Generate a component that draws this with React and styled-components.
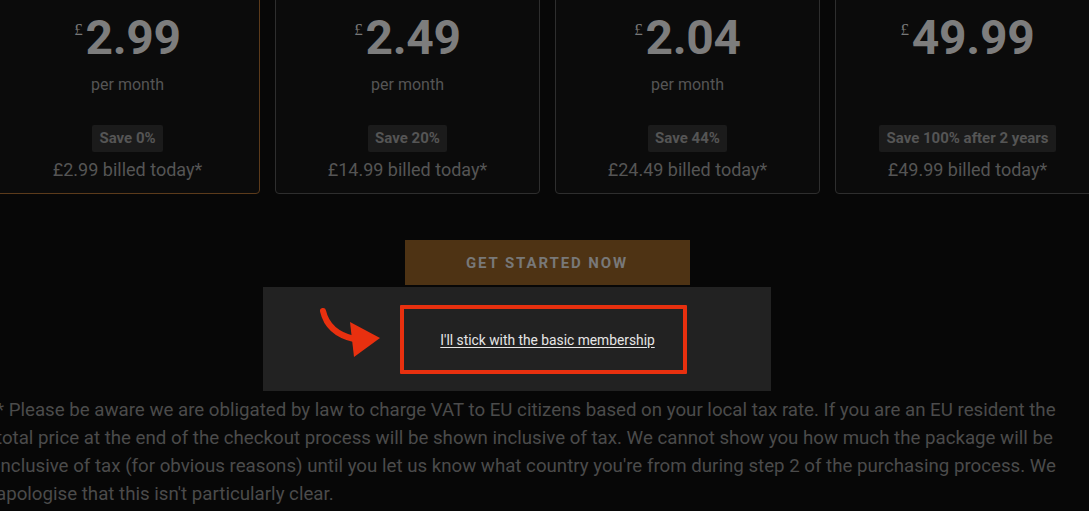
import React from 'react'
import styled, { createGlobalStyle } from 'styled-components'

const GlobalStyle = createGlobalStyle`
  html, body {
    margin: 0;
    padding: 0;
    background: #070707;
    overflow: hidden;
  }
  body {
    font-family: Roboto, "Liberation Sans", Arial, sans-serif;
  }
`

const Page = styled.div`
  width: 1104px;
  margin: -20px 0 0 -5px;
`

const CardRow = styled.div`
  display: grid;
  grid-template-columns: repeat(4, 265px);
  column-gap: 15px;
`

const Card = styled.div`
  display: flex;
  flex-direction: column;
  align-items: center;
  padding: 33px 0 11px;
  background: #0b0b0b;
  border: 1px solid ${(p) => (p.active ? '#5c3b1b' : '#2e2e2e')};
  border-radius: 4px;
`

const Price = styled.div`
  display: flex;
  align-items: flex-start;
  color: #7d7d7d;
  font-size: 48px;
  font-weight: 700;
  line-height: 48px;
  letter-spacing: -0.3px;
`

const Currency = styled.span`
  font-family: "Liberation Serif", "Times New Roman", serif;
  font-size: 17px;
  font-weight: 400;
  line-height: 17px;
  margin: 7px 3px 0 0;
  color: #777;
`

const Period = styled.div`
  margin-top: 13px;
  height: 20px;
  color: #555;
  font-size: 16px;
  line-height: 20px;
`

const Badge = styled.div`
  margin-top: 30px;
  padding: 4px 7px;
  background: #1b1b1b;
  border-radius: 2px;
  color: #555;
  font-size: 15px;
  font-weight: 700;
  line-height: 19px;
`

const Billed = styled.div`
  margin-top: 6px;
  color: #555;
  font-size: 18px;
  line-height: 24px;
`

const CtaWrap = styled.div`
  display: flex;
  justify-content: center;
  margin-top: 46px;
`

const CtaButton = styled.button`
  width: 285px;
  height: 45px;
  border: none;
  background: #4e3314;
  color: #787878;
  font-family: Roboto, "Liberation Sans", Arial, sans-serif;
  font-size: 15px;
  font-weight: 700;
  letter-spacing: 1.9px;
  text-transform: uppercase;
  cursor: pointer;
`

const DeclinePanel = styled.div`
  position: relative;
  width: 508px;
  height: 104px;
  margin: 2px 0 0 268px;
  padding: 18px 0 0 137px;
  box-sizing: border-box;
  background: #222;
`

const Arrow = styled.svg`
  position: absolute;
  left: 55px;
  top: 18px;
`

const Highlight = styled.div`
  display: flex;
  align-items: center;
  justify-content: center;
  width: 287px;
  height: 69px;
  box-sizing: border-box;
  border: 4px solid #e8300f;
  border-radius: 1px;
`

const DeclineLink = styled.a`
  margin-left: 8px;
  color: #e6e6e6;
  font-size: 13.8px;
  text-decoration: underline;
  text-underline-offset: 2px;
  cursor: pointer;
`

const Footnote = styled.p`
  width: 1068px;
  margin: 5px 0 0 1px;
  color: #4b4b4b;
  font-size: 18.7px;
  line-height: 28px;
`

const plans = [
  { price: '2.99', period: 'per month', save: 'Save 0%', billed: '£2.99 billed today*', active: true },
  { price: '2.49', period: 'per month', save: 'Save 20%', billed: '£14.99 billed today*' },
  { price: '2.04', period: 'per month', save: 'Save 44%', billed: '£24.49 billed today*' },
  { price: '49.99', period: '', save: 'Save 100% after 2 years', billed: '£49.99 billed today*' },
]

const App = () => (
  <>
    <GlobalStyle />
    <Page>
      <CardRow>
        {plans.map((plan) => (
          <Card key={plan.price} active={plan.active}>
            <Price>
              <Currency>£</Currency>
              {plan.price}
            </Price>
            <Period>{plan.period}</Period>
            <Badge>{plan.save}</Badge>
            <Billed>{plan.billed}</Billed>
          </Card>
        ))}
      </CardRow>

      <CtaWrap>
        <CtaButton>Get started now</CtaButton>
      </CtaWrap>

      <DeclinePanel>
        <Arrow width="66" height="56" viewBox="0 0 66 56">
          <path d="M5 6 Q 10 28 36 34" fill="none" stroke="#e8300f" strokeWidth="6" strokeLinecap="round" />
          <polygon points="32,17 62,33 36,52" fill="#e8300f" />
        </Arrow>
        <Highlight>
          <DeclineLink>I'll stick with the basic membership</DeclineLink>
        </Highlight>
      </DeclinePanel>

      <Footnote>
        * Please be aware we are obligated by law to charge VAT to EU citizens based on your local tax rate. If you are an EU resident the
        total price at the end of the checkout process will be shown inclusive of tax. We cannot show you how much the package will be
        inclusive of tax (for obvious reasons) until you let us know what country you're from during step 2 of the purchasing process. We
        apologise that this isn't particularly clear.
      </Footnote>
    </Page>
  </>
)

export default App
